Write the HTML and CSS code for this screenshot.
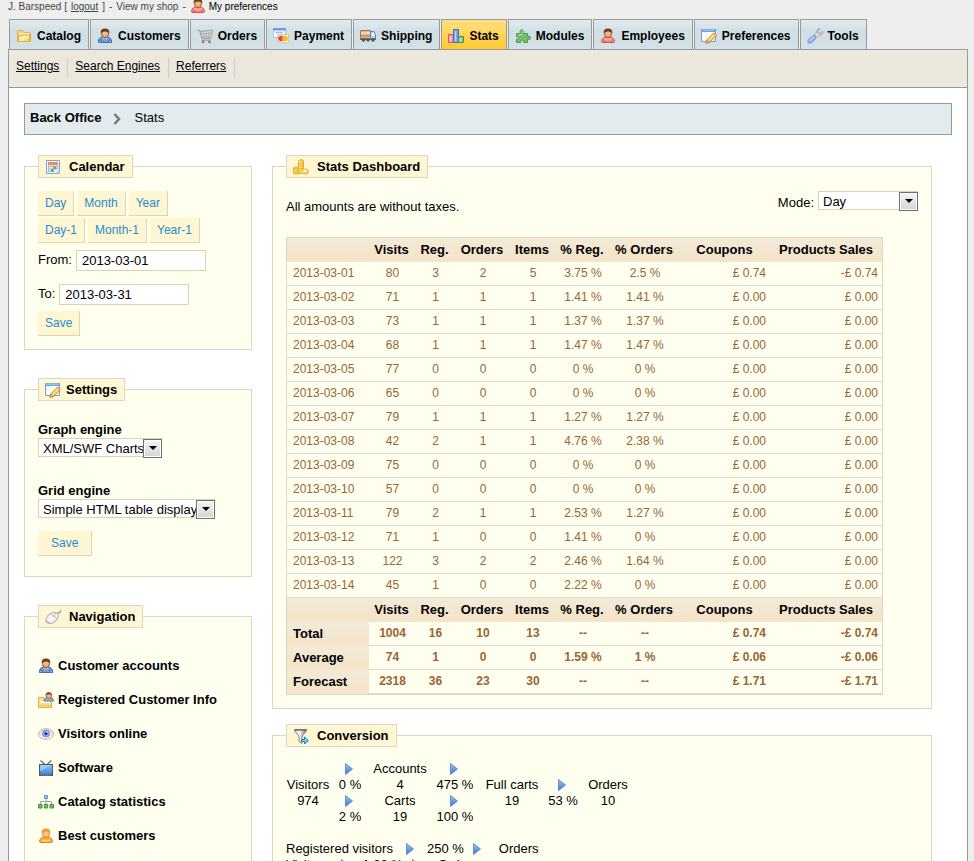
FILE: index.html
```html
<!DOCTYPE html>
<html lang="en">
<head>
<meta charset="utf-8">
<title>Back Office - Stats</title>
<link rel="stylesheet" href="styles.css">
</head>
<body>
<svg class="sprite" aria-hidden="true">
  <defs>
    <linearGradient id="g-arrow" x1="0" y1="0" x2="0" y2="1"><stop offset="0" stop-color="#9cc4f4"/><stop offset="1" stop-color="#3a78d0"/></linearGradient>
    <linearGradient id="g-gold" x1="0" y1="0" x2="1" y2="0"><stop offset="0" stop-color="#fff0a0"/><stop offset="1" stop-color="#f0b838"/></linearGradient>
    <linearGradient id="g-funnel" x1="0" y1="0" x2="1" y2="0"><stop offset="0" stop-color="#c4c4cc"/><stop offset=".4" stop-color="#ffffff"/><stop offset="1" stop-color="#74747c"/></linearGradient>
    <linearGradient id="g-tv" x1="0" y1="0" x2="0" y2="1"><stop offset="0" stop-color="#8cc4f4"/><stop offset="1" stop-color="#3c8ce0"/></linearGradient>
  </defs>
  <symbol id="folder" viewBox="0 0 16 16">
    <path d="M1.500 13.500V3.500q0-1 1-1h4l1 2h6q1 0 1 1v8z" fill="#f5d67c" stroke="#dcae4c"/>
    <path d="M3.500 6.500h10v-1.500h-10z" fill="#fff" stroke="#e6c476" stroke-width=".5"/>
    <path d="M2.500 13.500V8h3l1-1h7v6.500z" fill="#fdeea8" stroke="#e0b040"/>
    <path d="M13.500 8.500V13H8z" fill="#f4c04c" opacity=".6"/>
  </symbol>
  <symbol id="person" viewBox="0 0 16 16">
    <path d="M1.500 14.500v-2q.3-2.500 3.500-3.500h6q3.200 1 3.500 3.500v2z" fill="#6c9cd4" stroke="#3c6cac"/>
    <path d="M5 9.500l3 4.500 3-4.500z" fill="#a9cbf0"/><path d="M7.500 10.500h1v3h-1z" fill="#c05a4a"/>
    <path d="M1.500 12.500h3v2h-3zM11.500 12.500h3v2h-3z" fill="#8cb6e6" stroke="#3c6cac" stroke-width=".7"/>
    <ellipse cx="8" cy="5.500" rx="3.500" ry="4" fill="#efb98a" stroke="#8a5030"/>
    <path d="M3.800 5.500Q3 .5 8 .5t4.200 5q-1.200-2-4.200-2t-4.200 2z" fill="#6f3a1c"/>
  </symbol>
  <symbol id="person-red" viewBox="0 0 16 16">
    <path d="M1.500 13q.3-3 3.500-4h6q3.200 1 3.500 4 0 1.500-1.500 1.500H3q-1.500 0-1.500-1.500z" fill="#fa8a82" stroke="#d4504a"/>
    <path d="M4.500 14v-1.500M11.500 14v-1.500" stroke="#d4524c"/><path d="M4 10.500q4 2.500 8 0" stroke="#ffc0b8" fill="none"/>
    <ellipse cx="8" cy="5.500" rx="3.500" ry="4" fill="#f1b286" stroke="#9a5a34"/>
    <path d="M3.800 5.500Q3 .5 8 .5t4.200 5q-1.200-2-4.200-2t-4.200 2z" fill="#74401c"/>
  </symbol>
  <symbol id="person-orange" viewBox="0 0 16 16">
    <path d="M1.500 13q.3-3 3.500-4h6q3.200 1 3.500 4 0 1.500-1.500 1.500H3q-1.500 0-1.500-1.500z" fill="#fbb03c" stroke="#dc861c"/>
    <path d="M4 12q4 2.500 8 0" stroke="#ffe09a" fill="none"/>
    <ellipse cx="8" cy="5.500" rx="3.500" ry="4" fill="#fac87c" stroke="#d8841c"/>
    <path d="M3.800 5.500Q3 .5 8 .5t4.200 5q-1.200-2-4.200-2t-4.200 2z" fill="#ec9c28"/>
  </symbol>
  <symbol id="cart" viewBox="0 0 16 16">
    <path d="M.5 2.500h2.200l2.500 8.500h8.300" fill="none" stroke="#a0a0a0" stroke-width="1.200"/>
    <path d="M3.500 3.500L15.500 2l-1.500 8H5.200z" fill="#e8e8e8" stroke="#9c9c9c"/>
    <path d="M6.500 3.500l1 6.500M9.500 3v7M12.500 2.500l-1 7.500M4 6l11-1M4.500 8.300L14.500 7.500" stroke="#a0a0a0" stroke-width=".8"/>
    <path d="M4.500 12.500h9" stroke="#aaa"/><circle cx="6" cy="14" r="1.300" fill="#787878"/><circle cx="12.500" cy="14" r="1.300" fill="#787878"/>
  </symbol>
  <symbol id="payment" viewBox="0 0 16 16">
    <path d="M.5.500h12v9H.5z" fill="#f6faff" stroke="#a9c4e6"/><path d="M0 0h13v2.500H0z" fill="#6c9cdc"/>
    <path d="M3 4.500h7" stroke="#7aa4dc" stroke-width="1.500" stroke-dasharray="1.500 .7"/>
    <path d="M4.500 6.500h11v8h-11z" fill="#fff8e4" stroke="#e0c8a0"/>
    <circle cx="8" cy="10.500" r="2.800" fill="#e8403a"/><circle cx="12" cy="10.500" r="2.800" fill="#f7b83a"/>
  </symbol>
  <symbol id="truck" viewBox="0 0 16 16">
    <path d="M.5 2.500h10v8H.5z" fill="#e4b484" stroke="#a07c54"/><path d="M1 5h9" stroke="#fbe0c0" stroke-width="1.500"/><path d="M1 8h9" stroke="#b88458"/>
    <path d="M10.500 3.500h3.500l1.500 3v4h-5z" fill="#b4d4f8" stroke="#5c88bc"/><path d="M12 5h2l.6 2.500H12z" fill="#fff"/>
    <path d="M0 10.500h16v1.500H0z" fill="#6c6c6c"/><circle cx="3.500" cy="12" r="1.700" fill="#444"/><circle cx="8" cy="12" r="1.500" fill="#444"/><circle cx="13" cy="12" r="1.700" fill="#444"/><circle cx="3.500" cy="12" r=".6" fill="#bbb"/><circle cx="13" cy="12" r=".6" fill="#bbb"/>
  </symbol>
  <symbol id="chart" viewBox="0 0 16 16">
    <path d="M.5 6.500h5v8h-5z" fill="#f88c94" stroke="#dc5464"/><path d="M2.500 8v5.500" stroke="#fdd" stroke-width="1.500"/>
    <path d="M5.500 1.500h5v13h-5z" fill="#6e9cec" stroke="#4470c4"/><path d="M7.500 3v10.500" stroke="#b8d2ff" stroke-width="1.500"/>
    <path d="M10.500 8.500h5v6h-5z" fill="#84c484" stroke="#4c944c"/><path d="M12.500 10v3.500" stroke="#d0f0d0" stroke-width="1.500"/>
  </symbol>
  <symbol id="plugin" viewBox="0 0 16 16">
    <path d="M1.500 5.500h3.800q-1-3.500 1.400-4 2.400.5 1.400 4h4.400v2.800q3-.8 3 1.500t-3 1.500v3.200H8.700q.6-2.500-1.500-2.500t-1.500 2.500H1.500v-3.300q2.500.5 2.500-1.300t-2.500-1.300z" fill="#72c06c" stroke="#4c9c4c"/>
    <path d="M3 7h4v-4" fill="none" stroke="#b2e2a8"/>
  </symbol>
  <symbol id="edit" viewBox="0 0 16 16">
    <path d="M.5 1.500h14v12H.5z" fill="#f8fbff" stroke="#6c9cd0"/><path d="M0 1h15v3H0z" fill="#6ca4e0"/><path d="M1.500 2.200h12" stroke="#b0d0f4"/>
    <path d="M5 15.300l.9-3.500L12.500 5l3 2.600-6.800 6.800z" fill="#f8cc4c" stroke="#c48c28" stroke-width=".8"/><path d="M7.500 12.800l6-6.200" stroke="#fff0a0"/>
    <path d="M5 15.300l.9-3.500 2.800 2.600z" fill="#f0c8a0" stroke="#a06828" stroke-width=".6"/><path d="M12.500 5l3 2.600" stroke="#e8a070" stroke-width="1.500"/>
  </symbol>
  <symbol id="wrench" viewBox="0 0 16 16">
    <path d="M7 7.500l2-2q-.4-3.500 3.500-5l.5.500-1.800 2.300.4 1.800 1.800.2 2-2 .5.500q-.6 3.600-4.400 3.700L9.500 9.500z" fill="#e0e0e0" stroke="#989898" stroke-width=".9"/>
    <path d="M7 7.200l2.400 2.400-4.800 5q-1.800 1.300-3.300 0-1.200-1.500.3-3z" fill="#9cb8f4" stroke="#6c8cd0"/><path d="M2.500 12.500L7 8.500" stroke="#d0e0ff"/>
  </symbol>
  <symbol id="calendar" viewBox="0 0 16 16">
    <path d="M1.500 1.500h13v13h-13z" fill="#f4f8ff" stroke="#7ba4d4"/><path d="M3 3h10v3H3z" fill="#f4845c"/>
    <path d="M3 6h10v7H3z" fill="#fff"/><path d="M3 7.500h10M3 10h10M3 12.500h7M3.500 6v7M6 6v7M8.500 6v7M11 6v5M12.900 6v4" stroke="#94a4b4" stroke-width=".7"/>
    <path d="M8.500 7.500H11V10H8.500zM6 10h2.500v2.500H6z" fill="#64a864"/><path d="M10 14.500l4.500-4.500v4.500z" fill="#b4d0f0"/>
  </symbol>
  <symbol id="mouse" viewBox="0 0 16 16">
    <path d="M11.500 5.500q1-3 2.500-1.500t1.500-3" fill="none" stroke="#888"/>
    <ellipse cx="7" cy="9" rx="7" ry="4.500" transform="rotate(-38 7 9)" fill="#f6f6f6" stroke="#b0b0b0"/>
    <path d="M6 4.500q1.500 3.500 5.500 4M10.500 4l-1.300 3" fill="none" stroke="#b8b8b8"/><path d="M1.500 11.500q.5 2 3 2" stroke="#e88" fill="none"/>
  </symbol>
  <symbol id="coins" viewBox="0 0 16 16">
    <path d="M5.500 1.500q2.500-2 5 0v13h-5z" fill="url(#g-gold)" stroke="#e4b030"/><path d="M5.500 4q2.500 1.300 5 0M5.500 6.500q2.500 1.300 5 0M5.500 9q2.500 1.300 5 0" fill="none" stroke="#e4b030" stroke-width=".8"/>
    <path d="M.5 9q3-2.500 5.500 0v5.500q-2.500 1.500-5.500 0z" fill="url(#g-gold)" stroke="#e4b030"/><path d="M.5 9q3 2 5.500 0M.5 11q3 2 5.500 0M.5 13q3 2 5.500 0" fill="none" stroke="#e4b030" stroke-width=".8"/>
    <ellipse cx="12" cy="12.500" rx="3.500" ry="2.500" fill="url(#g-gold)" stroke="#e4b030"/><ellipse cx="12" cy="12" rx="2" ry="1.200" fill="#fff4b8"/>
  </symbol>
  <symbol id="funnel" viewBox="0 0 16 16">
    <path d="M1.500 1.500h12v1.500L9 8v7.500l-3-2V8L1.500 3z" fill="url(#g-funnel)" stroke="#84848c"/><path d="M2 2h11" stroke="#6c6c74" stroke-width="1.500"/>
    <path d="M8.500 11.500h3V9l4 3.700-4 3.300v-2.500h-3z" fill="#74d0f4" stroke="#1c80b8"/>
  </symbol>
  <symbol id="usercard" viewBox="0 0 16 16">
    <path d="M.5 5.500h5l1 2h7v8H.5z" fill="#fbe28a" stroke="#dcac4c"/><path d="M2 10h10" stroke="#fff8d0" stroke-width="2"/><path d="M1.500 13.500h11" stroke="#f4c454" stroke-width="1.500"/>
    <path d="M6 9q0-3 2.500-3.500h4.500q2.500.5 2.500 3.500z" fill="#8cb4e4" stroke="#5480b8"/><ellipse cx="10.800" cy="3.500" rx="2.700" ry="3" fill="#efb98a" stroke="#945028" stroke-width=".8"/><path d="M7.500 3.500Q8 .2 10.800.2T14 3.500q-3-2-6.500 0z" fill="#8a4c20"/>
  </symbol>
  <symbol id="eye" viewBox="0 0 16 16">
    <ellipse cx="8" cy="8" rx="7.500" ry="5.300" fill="#fdf0ea" stroke="#d8ac9c"/><path d="M1.500 7.500q6.500-7 13 0-6.500 6-13 0z" fill="#fff" stroke="#bdb4c8" stroke-width=".7"/>
    <circle cx="8" cy="7.500" r="3.500" fill="#8cacf0" stroke="#6484d0" stroke-width=".8"/><circle cx="8" cy="7.500" r="1.500" fill="#182860"/><circle cx="9.200" cy="6.300" r=".7" fill="#fff"/>
  </symbol>
  <symbol id="tv" viewBox="0 0 16 16">
    <path d="M2.500.500L7 4.500M13.500.500L9 4.500" stroke="#666" stroke-width="1.200"/><path d="M1 4h14v12H1z" fill="#505c6c"/><path d="M2 5h12v9H2z" fill="url(#g-tv)"/><path d="M2 5h12L2 11z" fill="#b4dcfc" opacity=".5"/><path d="M3 15h10" stroke="#a0a0a0" stroke-dasharray="1 1"/>
  </symbol>
  <symbol id="sitemap" viewBox="0 0 16 16">
    <path d="M2.500 10.500V7.500h11v3M8 5v5.500" fill="none" stroke="#a4a4a4"/>
    <path d="M6.500 1.500h3v3h-3z" fill="#9cc0f4" stroke="#6c94d4"/><path d="M.5 10.500H4V14H.5zM6.300 10.500h3.400V14H6.300zM12 10.500h3.500V14H12z" fill="#7cc06c" stroke="#409038"/>
  </symbol>
  <symbol id="arrow" viewBox="0 0 8 12"><path d="M.5.500v11L7.500 6z" fill="url(#g-arrow)" stroke="#4c80c8" stroke-width=".8"/></symbol>
  <symbol id="crumb" viewBox="0 0 8 12"><path d="M1.500 1l4.500 5-4.500 5" fill="none" stroke="#787878" stroke-width="2.500"/></symbol>
</svg>

<header class="userbar">
  <span>J. Barspeed [</span><a class="logout" href="#">logout</a><span>]</span><span>-</span><a href="#">View my shop</a><span>-</span>
  <a class="my-prefs" href="#"><svg class="icon"><use href="#person-red"/></svg>My preferences</a>
</header>

<nav class="tabs">
  <a href="#"><svg class="icon"><use href="#folder"/></svg>Catalog</a>
  <a href="#"><svg class="icon"><use href="#person"/></svg>Customers</a>
  <a href="#"><svg class="icon"><use href="#cart"/></svg>Orders</a>
  <a href="#"><svg class="icon"><use href="#payment"/></svg>Payment</a>
  <a href="#"><svg class="icon"><use href="#truck"/></svg>Shipping</a>
  <a class="active" href="#"><svg class="icon"><use href="#chart"/></svg>Stats</a>
  <a href="#"><svg class="icon"><use href="#plugin"/></svg>Modules</a>
  <a href="#"><svg class="icon"><use href="#person-red"/></svg>Employees</a>
  <a href="#"><svg class="icon"><use href="#edit"/></svg>Preferences</a>
  <a href="#"><svg class="icon"><use href="#wrench"/></svg>Tools</a>
</nav>

<div class="page">
  <nav class="subtabs">
    <span><a href="#">Settings</a></span>
    <span><a href="#">Search Engines</a></span>
    <span><a href="#">Referrers</a></span>
  </nav>
  <main class="content">
    <div class="breadcrumb"><a href="#">Back Office</a><svg class="crumb-arrow"><use href="#crumb"/></svg><span>Stats</span></div>
    <div class="columns">
      <aside class="side">
        <fieldset class="calendar">
          <legend><svg class="icon"><use href="#calendar"/></svg>Calendar</legend>
          <div class="buttons">
            <button type="button">Day</button><button type="button">Month</button><button type="button">Year</button>
          </div>
          <div class="buttons">
            <button type="button">Day-1</button><button type="button">Month-1</button><button type="button">Year-1</button>
          </div>
          <div class="field"><label for="from">From:</label><input id="from" type="text" value="2013-03-01"></div>
          <div class="field"><label for="to">To:</label><input id="to" type="text" value="2013-03-31"></div>
          <button type="button">Save</button>
        </fieldset>

        <fieldset class="settings">
          <legend class="tight"><svg class="icon"><use href="#edit"/></svg>Settings</legend>
          <div class="engine">
            <label for="graph">Graph engine</label>
            <span class="select"><select id="graph"><option>XML/SWF Charts</option></select></span>
          </div>
          <div class="engine">
            <label for="grid">Grid engine</label>
            <span class="select"><select id="grid"><option>Simple HTML table display</option></select></span>
          </div>
          <button class="wide" type="button">Save</button>
        </fieldset>

        <fieldset class="navigation">
          <legend><svg class="icon"><use href="#mouse"/></svg>Navigation</legend>
          <ul>
            <li><a href="#"><svg class="icon"><use href="#person"/></svg>Customer accounts</a></li>
            <li><a href="#"><svg class="icon"><use href="#usercard"/></svg>Registered Customer Info</a></li>
            <li><a href="#"><svg class="icon"><use href="#eye"/></svg>Visitors online</a></li>
            <li><a href="#"><svg class="icon"><use href="#tv"/></svg>Software</a></li>
            <li><a href="#"><svg class="icon"><use href="#sitemap"/></svg>Catalog statistics</a></li>
            <li><a href="#"><svg class="icon"><use href="#person-orange"/></svg>Best customers</a></li>
          </ul>
        </fieldset>
      </aside>

      <section class="main">
        <fieldset class="dashboard">
          <legend><svg class="icon"><use href="#coins"/></svg>Stats Dashboard</legend>
          <div class="intro">
            <p>All amounts are without taxes.</p>
            <div class="mode"><label for="mode">Mode:</label><span class="select"><select id="mode"><option>Day</option></select></span></div>
          </div>
          <table class="stats">
            <colgroup><col class="c-date"><col class="c-visits"><col class="c-reg"><col class="c-orders"><col class="c-items"><col class="c-orders"><col class="c-porders"><col class="c-coupons"><col class="c-sales"></colgroup>
            <thead>
              <tr><th></th><th>Visits</th><th>Reg.</th><th>Orders</th><th>Items</th><th>% Reg.</th><th>% Orders</th><th>Coupons</th><th>Products Sales</th></tr>
            </thead>
            <tbody>
              <tr><td>2013-03-01</td><td>80</td><td>3</td><td>2</td><td>5</td><td>3.75 %</td><td>2.5 %</td><td>£ 0.74</td><td>-£ 0.74</td></tr>
              <tr><td>2013-03-02</td><td>71</td><td>1</td><td>1</td><td>1</td><td>1.41 %</td><td>1.41 %</td><td>£ 0.00</td><td>£ 0.00</td></tr>
              <tr><td>2013-03-03</td><td>73</td><td>1</td><td>1</td><td>1</td><td>1.37 %</td><td>1.37 %</td><td>£ 0.00</td><td>£ 0.00</td></tr>
              <tr><td>2013-03-04</td><td>68</td><td>1</td><td>1</td><td>1</td><td>1.47 %</td><td>1.47 %</td><td>£ 0.00</td><td>£ 0.00</td></tr>
              <tr><td>2013-03-05</td><td>77</td><td>0</td><td>0</td><td>0</td><td>0 %</td><td>0 %</td><td>£ 0.00</td><td>£ 0.00</td></tr>
              <tr><td>2013-03-06</td><td>65</td><td>0</td><td>0</td><td>0</td><td>0 %</td><td>0 %</td><td>£ 0.00</td><td>£ 0.00</td></tr>
              <tr><td>2013-03-07</td><td>79</td><td>1</td><td>1</td><td>1</td><td>1.27 %</td><td>1.27 %</td><td>£ 0.00</td><td>£ 0.00</td></tr>
              <tr><td>2013-03-08</td><td>42</td><td>2</td><td>1</td><td>1</td><td>4.76 %</td><td>2.38 %</td><td>£ 0.00</td><td>£ 0.00</td></tr>
              <tr><td>2013-03-09</td><td>75</td><td>0</td><td>0</td><td>0</td><td>0 %</td><td>0 %</td><td>£ 0.00</td><td>£ 0.00</td></tr>
              <tr><td>2013-03-10</td><td>57</td><td>0</td><td>0</td><td>0</td><td>0 %</td><td>0 %</td><td>£ 0.00</td><td>£ 0.00</td></tr>
              <tr><td>2013-03-11</td><td>79</td><td>2</td><td>1</td><td>1</td><td>2.53 %</td><td>1.27 %</td><td>£ 0.00</td><td>£ 0.00</td></tr>
              <tr><td>2013-03-12</td><td>71</td><td>1</td><td>0</td><td>0</td><td>1.41 %</td><td>0 %</td><td>£ 0.00</td><td>£ 0.00</td></tr>
              <tr><td>2013-03-13</td><td>122</td><td>3</td><td>2</td><td>2</td><td>2.46 %</td><td>1.64 %</td><td>£ 0.00</td><td>£ 0.00</td></tr>
              <tr><td>2013-03-14</td><td>45</td><td>1</td><td>0</td><td>0</td><td>2.22 %</td><td>0 %</td><td>£ 0.00</td><td>£ 0.00</td></tr>
            </tbody>
            <tfoot>
              <tr><th></th><th>Visits</th><th>Reg.</th><th>Orders</th><th>Items</th><th>% Reg.</th><th>% Orders</th><th>Coupons</th><th>Products Sales</th></tr>
              <tr><th>Total</th><td>1004</td><td>16</td><td>10</td><td>13</td><td>--</td><td>--</td><td>£ 0.74</td><td>-£ 0.74</td></tr>
              <tr><th>Average</th><td>74</td><td>1</td><td>0</td><td>0</td><td>1.59 %</td><td>1 %</td><td>£ 0.06</td><td>-£ 0.06</td></tr>
              <tr><th>Forecast</th><td>2318</td><td>36</td><td>23</td><td>30</td><td>--</td><td>--</td><td>£ 1.71</td><td>-£ 1.71</td></tr>
            </tfoot>
          </table>
        </fieldset>

        <fieldset class="conversion">
          <legend><svg class="icon"><use href="#funnel"/></svg>Conversion</legend>
          <div class="flow">
            <div class="step"><span>Visitors</span><span>974</span></div>
            <div class="step"><svg class="arrow"><use href="#arrow"/></svg><span>0 %</span><svg class="arrow"><use href="#arrow"/></svg><span>2 %</span></div>
            <div class="step"><span>Accounts</span><span>4</span><span>Carts</span><span>19</span></div>
            <div class="step"><svg class="arrow"><use href="#arrow"/></svg><span>475 %</span><svg class="arrow"><use href="#arrow"/></svg><span>100 %</span></div>
            <div class="step"><span>Full carts</span><span>19</span></div>
            <div class="step"><svg class="arrow"><use href="#arrow"/></svg><span>53 %</span></div>
            <div class="step"><span>Orders</span><span>10</span></div>
          </div>
          <div class="rate"><span>Registered visitors</span><svg class="arrow"><use href="#arrow"/></svg><span>250 %</span><svg class="arrow"><use href="#arrow"/></svg><span class="goal">Orders</span></div>
          <div class="rate"><span>Visitors</span><svg class="arrow"><use href="#arrow"/></svg><span>1.03 %</span><svg class="arrow"><use href="#arrow"/></svg><span class="goal">Orders</span></div>
        </fieldset>
      </section>
    </div>
  </main>
</div>
</body>
</html>
```
FILE: styles.css
```css
* { box-sizing: border-box; }

body {
  margin: 0;
  padding: 0 6px 0 8px;
  background: #eee;
  color: #000;
  font: 13px/16px "Liberation Sans", Arial, sans-serif;
}

a { color: inherit; text-decoration: none; }
.sprite { position: absolute; width: 0; height: 0; }
.icon { width: 16px; height: 16px; flex: none; }

.userbar {
  display: flex;
  gap: 4px;
  height: 19px;
  font-size: 10px;
  line-height: 14px;
  color: #444;
}
.userbar .logout { text-decoration: underline; }
.my-prefs { display: flex; gap: 3px; color: #000; }
.my-prefs .icon { margin-top: -2px; }

.tabs { display: flex; gap: 1px; padding-left: 1px; }
.tabs a {
  display: flex;
  align-items: center;
  gap: 5px;
  height: 30px;
  padding: 3px 7px 0 6px;
  border: 1px solid #999;
  border-bottom: 0;
  background: linear-gradient(#e2ebee, #d0dfe4 40%, #d4e1e6);
  font-size: 12px;
  font-weight: bold;
}
.tabs .active { background: linear-gradient(#ffe082, #ffc92e); }

.page { border: 1px solid #999; background: #fff; }

.subtabs {
  display: flex;
  height: 38px;
  padding: 8px 0 9px;
  border-bottom: 1px solid #999;
  background: #ebe9dd;
}
.subtabs span { padding: 0 8px 0 7px; border-right: 1px solid #ccc; font-size: 12px; }
.subtabs a { text-decoration: underline; }

.content { padding: 15px; }

.breadcrumb {
  display: flex;
  align-items: center;
  height: 32px;
  padding: 0 5px 2px;
  border: 1px solid #999;
  background: #e2ebee;
}
.breadcrumb a { font-weight: bold; }
.crumb-arrow { width: 8px; height: 12px; margin: 2px 14px 0 11px; }

.columns { display: flex; gap: 20px; padding: 20px 20px 0 0; }
.side { flex: none; width: 228px; display: flex; flex-direction: column; gap: 28px; }
.main { flex: 1; display: flex; flex-direction: column; gap: 15px; min-width: 0; }

fieldset {
  min-width: 0;
  margin: 0;
  padding: 13px;
  border: 1px solid #dfd5c3;
  background: #fffff0;
}
legend {
  display: flex;
  align-items: center;
  gap: 8px;
  height: 23px;
  padding: 0 7px 0 6px;
  border: 1px solid #dfd5c3;
  background: #fff6d3;
  font-weight: bold;
}
.tight { gap: 5px; }

button {
  display: block;
  height: 25px;
  padding: 0 7px;
  border: solid #dfd5af;
  border-width: 0 1px 1px 0;
  background: #fff6d3;
  color: #268ccd;
  font: 12px/16px "Liberation Sans", Arial, sans-serif;
}
.wide { padding: 0 13px; }
.buttons { display: flex; gap: 3px; margin-bottom: 2px; }

.field { display: flex; gap: 4px; margin: 7px 0 13px; line-height: 20px; }
.field + .field { margin-bottom: 6px; }
input {
  width: 130px;
  height: 21px;
  padding: 0 5px;
  border: 1px solid #e0d0b1;
  background: #fff;
  font: 13px/16px "Liberation Sans", Arial, sans-serif;
}

.engine { display: flex; flex-direction: column; align-items: flex-start; margin-bottom: 26px; }
.engine label { font-weight: bold; }
.engine + .engine { margin-bottom: 13px; }
.settings { padding: 21px 13px 20px; }

.select { position: relative; display: inline-flex; }
.select select {
  appearance: none;
  width: 100%;
  height: 19px;
  margin: 0;
  padding: 2px 16px 0 4px;
  border: 1px solid #e0d0b1;
  border-radius: 0;
  background: #fff;
  color: #000;
  font: 13px/16px "Liberation Sans", Arial, sans-serif;
}
.select::before {
  content: "";
  position: absolute;
  top: 1px;
  right: 0;
  width: 17px;
  height: 17px;
  border: 1px solid #707070;
  background: linear-gradient(#f4f4f4, #d4d4d4);
  box-shadow: inset 0 0 0 1px #fff;
  pointer-events: none;
}
.select::after {
  content: "";
  position: absolute;
  top: 8px;
  right: 5px;
  border: solid transparent;
  border-width: 4px 4px 0;
  border-top-color: #000;
  pointer-events: none;
}

.navigation ul { margin: 0; padding: 5px 0 0; list-style: none; }
.navigation li a { display: flex; align-items: center; gap: 4px; height: 34px; padding-top: 1px; font-weight: bold; }
.navigation { padding-top: 15px; }

.intro { display: flex; justify-content: space-between; margin-bottom: 22px; }
.intro p { margin: 8px 0 0; }
.mode { display: flex; gap: 4px; height: 22px; line-height: 24px; }
.mode .select { width: 100px; height: 19px; }

.stats {
  width: 597px;
  table-layout: fixed;
  border-collapse: separate;
  border-spacing: 0;
  border: 1px solid #dfd5c3;
}
.c-date { width: 82px; }
.c-visits { width: 45px; }
.c-reg { width: 41px; }
.c-orders { width: 54px; }
.c-items { width: 46px; }
.c-porders { width: 70px; }
.c-coupons { width: 91px; }
.c-sales { width: 112px; }

.stats th { height: 24px; padding: 0; background: linear-gradient(#f3ead8, #f4e3c7); }
.stats td {
  height: 24px;
  padding: 0 4px 2px 6px;
  border-bottom: 1px solid #dcdcd4;
  color: #963;
  font-size: 12px;
  text-align: center;
}
.stats tbody td:first-child { text-align: left; }
.stats td:nth-child(n+8) { text-align: right; }
.stats tfoot td { font-weight: bold; }
.stats tfoot th:first-child { padding-left: 6px; text-align: left; }

.arrow { width: 8px; height: 12px; margin: 2px 0; }
.flow {
  display: grid;
  grid-template-columns: 44px 40px 60px 50px 64px 38px 52px;
  align-items: center;
  margin-bottom: 16px;
}
.step { display: flex; flex-direction: column; align-items: center; }
.step .arrow { margin-right: 2px; }
.conversion { padding-top: 14px; }
.rate { display: flex; gap: 9px; }
.rate span + .arrow { margin-left: 4px; margin-right: 4px; }
.rate span + .arrow:nth-child(4) { margin-left: 0; margin-right: 9px; }
```
